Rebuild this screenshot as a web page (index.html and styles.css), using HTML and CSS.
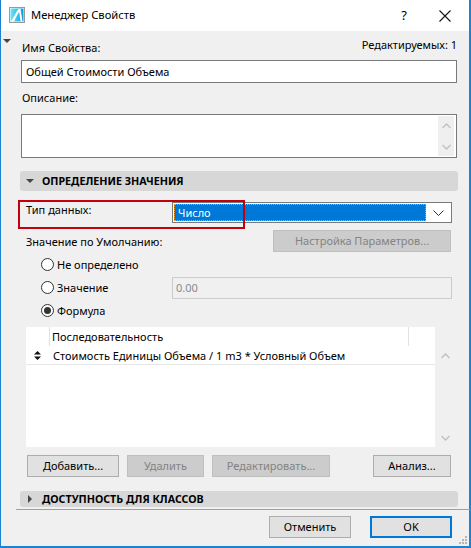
FILE: index.html
```html
<!DOCTYPE html>
<html lang="ru">
<head>
<meta charset="utf-8">
<title>Менеджер Свойств</title>
<link rel="stylesheet" href="styles.css">
</head>
<body>
<div class="window">
  <div class="titlebar">
    <svg class="app-icon" width="16" height="16" viewBox="0 0 16 16">
      <defs>
        <linearGradient id="g" x1="0" y1="0" x2="1" y2="0">
          <stop offset="0" stop-color="#6fe3f6"/>
          <stop offset="1" stop-color="#0a9ce0"/>
        </linearGradient>
      </defs>
      <rect x="0.5" y="0.5" width="15" height="15" fill="#ffffff" stroke="#9a9a9a"/>
      <rect x="1.5" y="1.5" width="13" height="13" fill="url(#g)"/>
      <path d="M2 14.5 C5 10 7 5 9.5 2 L11.5 2 L13.5 14.5 L11.5 14.5 L10.2 5 C8 8 6.5 11.5 5 14.5 Z" fill="#ffffff"/>
    </svg>
    <span class="title">Менеджер Свойств</span>
    <span class="tb-help">?</span>
    <svg class="tb-close" width="12" height="12" viewBox="0 0 12 12">
      <path d="M0.5 0.5 L11.5 11.5 M11.5 0.5 L0.5 11.5" stroke="#111" stroke-width="1.1" fill="none"/>
    </svg>
  </div>
  <div class="body">
    <div class="gutter"><span class="tri-down tri-small"></span></div>
    <div class="main">
      <div class="label-row">
        <span>Имя Свойства:</span>
        <span>Редактируемых: 1</span>
      </div>
      <div class="input name-input">Общей Стоимости Объема</div>
      <div class="label desc-label">Описание:</div>
      <div class="textarea">
        <div class="vscroll">
          <svg width="9" height="6" viewBox="0 0 9 6"><path d="M0.5 5 L4.5 1 L8.5 5" stroke="#c2c2c2" stroke-width="1.5" fill="none"/></svg>
          <svg width="9" height="6" viewBox="0 0 9 6"><path d="M0.5 1 L4.5 5 L8.5 1" stroke="#c2c2c2" stroke-width="1.5" fill="none"/></svg>
        </div>
      </div>
      <div class="section-bar first-bar"><span class="tri-down"></span><span>ОПРЕДЕЛЕНИЕ ЗНАЧЕНИЯ</span></div>
      <div class="type-row">
        <span class="type-label">Тип данных:</span>
        <div class="select">
          <div class="select-value">Число</div>
          <svg class="select-arrow" width="11" height="6" viewBox="0 0 11 6"><path d="M0.5 0.5 L5.5 5.5 L10.5 0.5" stroke="#333" stroke-width="1" fill="none"/></svg>
        </div>
        <div class="highlight"></div>
      </div>
      <div class="default-row">
        <span>Значение по Умолчанию:</span>
        <div class="btn disabled params-btn">Настройка Параметров...</div>
      </div>
      <div class="radio-row">
        <span class="radio"></span><span>Не определено</span>
      </div>
      <div class="radio-row">
        <span class="radio"></span><span class="radio-text">Значение</span>
        <div class="value-input">0.00</div>
      </div>
      <div class="radio-row">
        <span class="radio checked"></span><span>Формула</span>
      </div>
      <div class="list">
        <div class="list-head">
          <div class="lh-first"></div>
          <div class="lh-col">Последовательность</div>
          <div class="lh-last"></div>
        </div>
        <div class="list-body">
          <div class="list-rows">
            <div class="list-row">
              <span class="sort-icon">
                <svg width="7" height="9" viewBox="0 0 7 9"><path d="M3.5 0 L7 3.5 L0 3.5 Z M3.5 9 L7 5.5 L0 5.5 Z" fill="#111"/></svg>
              </span>
              <span>Стоимость Единицы Объема / 1 m3 * Условный Объем</span>
            </div>
          </div>
          <div class="list-scroll">
            <svg width="9" height="6" viewBox="0 0 9 6"><path d="M0.5 5 L4.5 1 L8.5 5" stroke="#c2c2c2" stroke-width="1.5" fill="none"/></svg>
            <svg width="9" height="6" viewBox="0 0 9 6"><path d="M0.5 1 L4.5 5 L8.5 1" stroke="#c2c2c2" stroke-width="1.5" fill="none"/></svg>
          </div>
        </div>
      </div>
      <div class="btn-row">
        <div class="btn add-btn">Добавить...</div>
        <div class="btn disabled del-btn">Удалить</div>
        <div class="btn disabled edit-btn">Редактировать...</div>
        <div class="spacer"></div>
        <div class="btn an-btn">Анализ...</div>
      </div>
      <div class="section-bar second-bar"><span class="tri-right"></span><span>ДОСТУПНОСТЬ ДЛЯ КЛАССОВ</span></div>
      <div class="separator"></div>
      <div class="footer">
        <div class="btn foot-btn">Отменить</div>
        <div class="btn foot-btn ok-btn">OK</div>
      </div>
    </div>
  </div>
  <div class="grip">
    <svg width="8" height="8" viewBox="0 0 8 8" fill="#b5b5b5">
      <rect x="6" y="0" width="2" height="2"/>
      <rect x="3" y="3" width="2" height="2"/><rect x="6" y="3" width="2" height="2"/>
      <rect x="0" y="6" width="2" height="2"/><rect x="3" y="6" width="2" height="2"/><rect x="6" y="6" width="2" height="2"/>
    </svg>
  </div>
</div>
</body>
</html>
```

FILE: styles.css
```css
* { box-sizing: border-box; }
html, body { margin: 0; padding: 0; }
body {
  font-family: "Noto Sans", "Open Sans", sans-serif;
  font-size: 11px;
  color: #000;
  background: #fff;
}
.window {
  position: relative;
  width: 471px;
  height: 548px;
  background: #f0f0f0;
  border-left: 1px solid #1a83d4;
  border-right: 2px solid #1a83d4;
  border-bottom: 2px solid #1a83d4;
  display: flex;
  flex-direction: column;
}
.titlebar {
  height: 31px;
  background: #fff;
  display: flex;
  align-items: center;
  flex: 0 0 31px;
}
.app-icon { margin-left: 8px; margin-top: -1px; }
.title { margin-left: 6px; font-size: 11.2px; line-height: 16px; margin-top: -1px; }
.tb-help { margin-left: auto; font-size: 13px; margin-right: 32px; margin-top: -2px; }
.tb-close { margin-right: 18px; }

.body { display: flex; flex: 1; }
.gutter { width: 20px; padding-top: 8px; padding-left: 2px; }
.tri-small {
  display: block;
  width: 0; height: 0;
  border-left: 3.5px solid transparent;
  border-right: 3.5px solid transparent;
  border-top: 4px solid #555;
}
.main { width: 436px; padding-top: 9px; display: flex; flex-direction: column; }

.label-row {
  display: flex;
  justify-content: space-between;
  line-height: 16px;
  height: 16px;
  padding-left: 1px;
}
.label-row span:last-child { margin-top: -3px; }
.input {
  margin-top: 4px;
  height: 23px;
  border: 1px solid #7a7a7a;
  background: #fff;
  line-height: 21px;
  padding-left: 4px;
}
.label { line-height: 16px; height: 16px; padding-left: 1px; }
.desc-label { margin-top: 7px; }
.textarea {
  margin-top: 8px;
  height: 44px;
  border: 1px solid #7a7a7a;
  background: #fff;
  display: flex;
  justify-content: flex-end;
  padding: 1px 2px 1px 0;
}
.vscroll {
  width: 16px;
  background: #efefef;
  display: flex;
  flex-direction: column;
  justify-content: space-between;
  align-items: center;
  padding: 7px 0 6px;
}
.section-bar {
  margin-left: -1px;
  margin-right: -1px;
  background: #d7d7d7;
  border-radius: 3px;
  display: flex;
  align-items: center;
  font-weight: bold;
  font-size: 10.7px;
  padding-left: 6px;
}
.section-bar span:last-child { margin-left: 8px; }
.first-bar { margin-top: 13px; height: 20px; }
.second-bar { margin-top: 14px; height: 16px; }
.tri-down {
  width: 0; height: 0;
  border-left: 4px solid transparent;
  border-right: 4px solid transparent;
  border-top: 4px solid #444;
}
.tri-right {
  width: 0; height: 0;
  border-top: 4px solid transparent;
  border-bottom: 4px solid transparent;
  border-left: 4px solid #444;
  margin-left: 2px;
  margin-right: 2px;
}

.type-row {
  position: relative;
  margin-top: 9px;
  height: 29px;
  display: flex;
  align-items: flex-start;
}
.type-label { margin-left: 5px; margin-top: 2px; line-height: 16px; width: 146px; }
.select {
  margin-top: 2px;
  width: 280px;
  height: 21px;
  border: 1px solid #7a7a7a;
  background: #fff;
  display: flex;
  align-items: center;
  padding: 1px;
}
.select-value {
  flex: 1;
  height: 17px;
  background: #0078d7;
  color: #fff;
  outline: 1px dotted #f0a030;
  outline-offset: -1px;
  line-height: 17px;
  padding-left: 4px;
}
.select-arrow { margin: 0 6px 0 7px; }
.highlight {
  position: absolute;
  left: -3px;
  top: 0;
  width: 227px;
  height: 29px;
  border: 2px solid #c3000d;
}
.default-row {
  display: flex;
  align-items: center;
  height: 24px;
  padding-left: 5px;
}
.btn {
  height: 22px;
  border: 1px solid #adadad;
  background: #e1e1e1;
  display: flex;
  align-items: center;
  justify-content: center;
  line-height: 16px;
}
.btn.disabled { background: #cccccc; border-color: #bfbfbf; color: #838383; }
.params-btn { margin-left: auto; margin-right: 6px; width: 178px; }
.radio-row {
  display: flex;
  align-items: center;
  height: 23px;
  padding-left: 20px;
}
.default-row + .radio-row { margin-top: 0; }
.radio {
  width: 13px; height: 13px;
  border: 1px solid #333;
  border-radius: 50%;
  background: #fff;
  margin-right: 3px;
  display: flex;
  align-items: center;
  justify-content: center;
}
.radio.checked::after {
  content: "";
  width: 7px; height: 7px;
  border-radius: 50%;
  background: #333;
}
.radio-text { width: 115px; }
.value-input {
  width: 280px;
  height: 22px;
  border: 1px solid #cccccc;
  color: #8a8a8a;
  line-height: 20px;
  padding-left: 3px;
}
.list {
  margin-top: 5px;
  margin-left: 5px;
  width: 429px;
  height: 120px;
  display: flex;
  flex-direction: column;
}
.list-head { display: flex; height: 19px; }
.lh-first { width: 24px; background: #fff; border-right: 1px solid #e2e2e2; }
.lh-col { width: 359px; background: #fff; border-right: 1px solid #e2e2e2; padding-left: 2px; line-height: 19px; }
.lh-last { width: 26px; background: #fff; }
.list-body { flex: 1; display: flex; }
.list-rows { width: 409px; background: #fff; }
.list-row {
  height: 19px;
  display: flex;
  align-items: center;
  border-bottom: 1px solid #e6e6e6;
}
.sort-icon { width: 27px; padding-left: 8px; display: flex; align-items: center; }
.list-scroll {
  width: 20px;
  display: flex;
  flex-direction: column;
  justify-content: space-between;
  align-items: center;
  padding: 7px 0 6px;
}
.btn-row { margin-top: 8px; display: flex; padding-left: 6px; padding-right: 6px; }
.add-btn { width: 92px; }
.del-btn { width: 77px; margin-left: 8px; }
.edit-btn { width: 118px; margin-left: 8px; }
.spacer { flex: 1; }
.an-btn { width: 78px; }
.separator {
  margin-top: 2px;
  margin-left: -5px;
  margin-right: -13px;
  height: 1px;
  background: #a0a0a0;
}
.footer { display: flex; justify-content: flex-end; margin-top: 6px; padding-right: 5px; }
.foot-btn { width: 82px; }
.ok-btn { margin-left: 19px; border: 2px solid #0078d7; }
.grip { position: absolute; right: 2px; bottom: 2px; line-height: 0; }
```
